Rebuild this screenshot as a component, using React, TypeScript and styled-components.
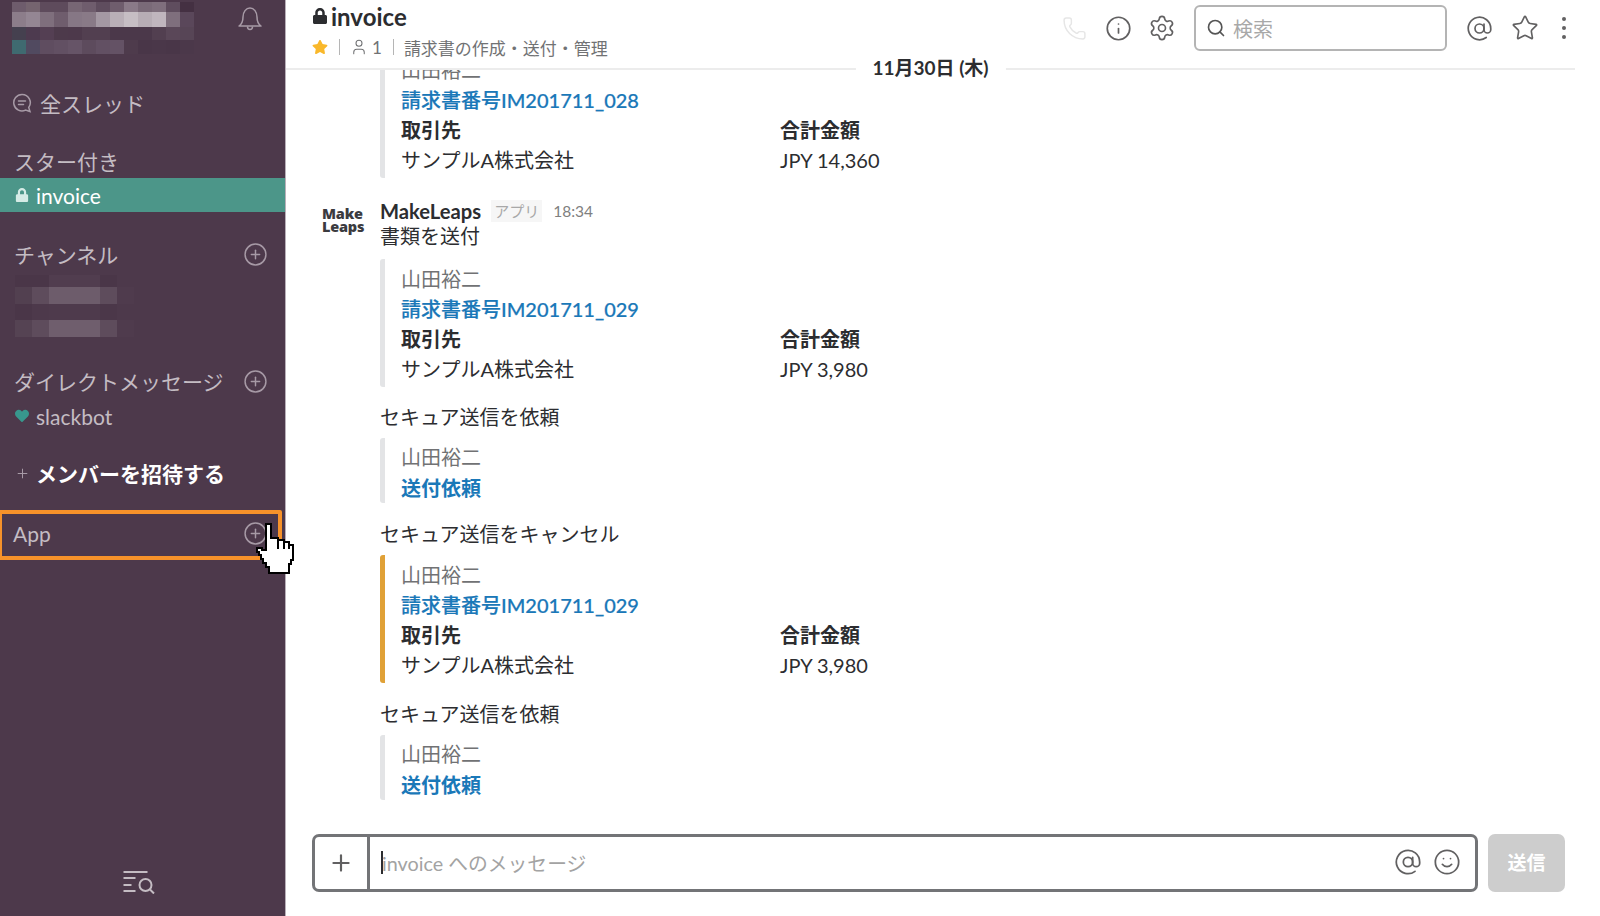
import React from 'react'
import styled, { createGlobalStyle } from 'styled-components'
import { AtSign, CirclePlus, Info, Phone, Plus, Search, Settings, Smile, Star, User } from 'lucide-react'
import { FaHeart, FaLock, FaStar } from 'react-icons/fa'

const GlobalStyle = createGlobalStyle`
  html, body {
    margin: 0;
    padding: 0;
    height: 100%;
    background: #fff;
    overflow: hidden;
    font-family: Lato, "Noto Sans CJK JP", sans-serif;
  }
  #root { height: 100%; }
`

const Page = styled.div`
  display: flex;
  width: 1600px;
  height: 916px;
  overflow: hidden;
`

const Sidebar = styled.aside`
  flex: none;
  display: flex;
  flex-direction: column;
  box-sizing: border-box;
  width: 286px;
  height: 100%;
  background: #4d394b;
  border-right: 1px solid #b9b0b9;
  color: #c4bcc3;
  font-size: 21px;
`

const TeamHeader = styled.div`
  display: flex;
  justify-content: space-between;
  height: 54px;
  padding: 2px 22px 0 12px;
`

const TeamMosaic = styled.div`
  display: grid;
  grid-template-columns: repeat(13, 14px);
  grid-template-rows: 10px 15px 13px 14px;
`

const ChannelMosaic = styled.div`
  display: grid;
  grid-template-columns: repeat(7, 17px);
  grid-template-rows: 12px 17px 16px 17px;
  margin: 7px 0 0 15px;
`

const Cell = styled.span<{ $c: string }>`
  background: ${({ $c }) => $c};
  filter: blur(0.6px);
`

const BellWrap = styled.div`
  margin-top: 3px;
  height: 26px;
  color: #a79aa6;
`

const Row = styled.div<{ $top: number }>`
  display: flex;
  align-items: center;
  justify-content: space-between;
  height: 28px;
  margin-top: ${({ $top }) => $top}px;
  padding: 0 17px 0 14px;
  white-space: nowrap;
`

const ThreadsRow = styled(Row)`
  justify-content: flex-start;
  gap: 8px;
  padding-left: 12px;
`

const ActiveChannel = styled.div`
  display: flex;
  align-items: center;
  gap: 7px;
  height: 34px;
  margin-top: 3px;
  padding-left: 15px;
  background: #4c9689;
  color: #fff;
`

const DirectRow = styled.div`
  display: flex;
  align-items: center;
  gap: 7px;
  height: 34px;
  margin-top: 4px;
  padding-left: 15px;
`

const InviteRow = styled(Row)`
  justify-content: flex-start;
  gap: 6px;
  padding-left: 15px;
  color: #fff;
  font-weight: 700;
`

const InvitePlus = styled.span`
  display: flex;
  color: #a79aa6;
`

const AppBox = styled.div`
  position: relative;
  display: flex;
  align-items: center;
  justify-content: space-between;
  box-sizing: border-box;
  width: 282px;
  height: 50px;
  margin-top: 23px;
  padding: 0 10px 4px 11px;
  border: 4px solid #f7922a;
  border-left-width: 2px;
  border-radius: 0 2px 2px 0;
`

const Cursor = styled.svg`
  position: absolute;
  left: 254px;
  top: 9px;
  shape-rendering: crispEdges;
`

const SearchFooter = styled.div`
  display: flex;
  justify-content: center;
  margin-top: auto;
  padding: 0 7px 22px 0;
`

const Main = styled.main`
  position: relative;
  flex: 1;
  display: flex;
  flex-direction: column;
  min-width: 0;
  height: 100%;
`

const Header = styled.header`
  position: relative;
  flex: none;
  z-index: 1;
  display: flex;
  justify-content: space-between;
  box-sizing: border-box;
  height: 70px;
  margin-right: 25px;
  padding: 5px 0 0 26px;
  background: #fff;
  border-bottom: 2px solid #ececec;
`

const TitleBlock = styled.div`
  display: flex;
  flex-direction: column;
`

const Title = styled.h1`
  display: flex;
  align-items: center;
  gap: 3px;
  height: 22px;
  margin: 0;
  color: #2c2d30;
  font-size: 24px;
  font-weight: 700;
`

const ChannelMeta = styled.div`
  display: flex;
  align-items: center;
  height: 24px;
  margin-top: 8px;
  color: #717274;
  font-size: 17px;
  white-space: nowrap;
`

const MetaSep = styled.span`
  width: 1px;
  height: 16px;
  margin: 0 10px 0 11px;
  background: #b5b5b5;
`

const MemberCount = styled.span`
  display: flex;
  align-items: center;
  gap: 4px;
`

const Toolbar = styled.div`
  display: flex;
  align-items: center;
  height: 46px;
`

const ToolIcon = styled.span<{ $gap: number; $faded?: boolean }>`
  display: flex;
  margin-left: ${({ $gap }) => $gap}px;
  color: ${({ $faded }) => ($faded ? '#e6e6e6' : '#616061')};
`

const SearchBox = styled.div`
  display: flex;
  align-items: center;
  gap: 7px;
  box-sizing: border-box;
  width: 253px;
  height: 46px;
  margin-left: 18px;
  padding-left: 10px;
  border: 2px solid #b4b4b4;
  border-radius: 6px;
  color: #a8a8a8;
  font-size: 20px;
`

const SearchGlass = styled.span`
  display: flex;
  color: #555;
`

const MoreDots = styled.span`
  display: flex;
  flex-direction: column;
  gap: 5px;
  margin: 0 9px 0 23px;
`

const Dot = styled.i`
  width: 4px;
  height: 4px;
  border-radius: 50%;
  background: #616061;
`

const DateDivider = styled.div`
  position: absolute;
  left: 50%;
  top: 55px;
  transform: translateX(-50%);
  padding: 0 17px;
  background: #fff;
  color: #2c2d30;
  font-size: 19px;
  font-weight: 700;
  line-height: 26px;
  white-space: nowrap;
`

const Messages = styled.section`
  flex: 1;
  display: flex;
  flex-direction: column;
  justify-content: flex-end;
  min-height: 0;
  overflow: hidden;
  padding-bottom: 34px;
  color: #2c2d30;
  font-size: 20px;
`

const MessageBody = styled.div`
  margin-left: 94px;
`

const AppMessage = styled.article`
  display: flex;
  margin-top: 20px;
`

const Avatar = styled.div`
  flex: none;
  box-sizing: border-box;
  width: 94px;
  padding: 9px 0 0 36px;
  color: #3b3b3f;
  font-family: "Open Sans", sans-serif;
  font-size: 14.500px;
  font-weight: 800;
  line-height: 13px;
  letter-spacing: -0.2px;
`

const AvatarSecond = styled.span`
  display: block;
`

const SenderLine = styled.div`
  display: flex;
  align-items: center;
  height: 25px;
`

const SenderName = styled.strong`
  font-size: 20.2px;
  font-weight: 700;
`

const AppBadge = styled.span`
  margin-left: 10px;
  padding: 0 3px;
  background: #f6f6f6;
  color: #a8a8a8;
  font-size: 15px;
  line-height: 22px;
`

const Time = styled.span`
  margin-left: 11px;
  color: #808080;
  font-size: 15.500px;
`

const MessageText = styled.div<{ $top?: number }>`
  margin-top: ${({ $top }) => $top ?? 16}px;
  line-height: 30px;
`

const SentText = styled.div`
  line-height: 26px;
`

const Attachment = styled.div<{ $warn?: boolean; $gap?: number }>`
  margin-top: ${({ $gap }) => $gap ?? 6}px;
  padding: 5px 0 3px 16px;
  border-left: 5px solid ${({ $warn }) => ($warn ? '#e0a137' : '#e3e4e6')};
  border-radius: 3px;
  line-height: 30px;
`

const ShortAttachment = styled(Attachment)`
  padding: 4px 0 0 16px;
  line-height: 30.500px;
`

const Author = styled.div`
  color: #717274;
`

const FileLink = styled.div`
  color: #1a78b8;
  font-weight: 500;
  -webkit-text-stroke: 0.2px #1a78b8;
`

const ActionLink = styled.div`
  color: #1a78b8;
  font-weight: 700;
`

const Fields = styled.div`
  display: grid;
  grid-template-columns: 379px 1fr;
`

const FieldLabel = styled.div`
  font-weight: 700;
`

const Composer = styled.div`
  flex: none;
  display: flex;
  gap: 10px;
  height: 82px;
  padding-left: 26px;
`

const InputShell = styled.div`
  display: flex;
  box-sizing: border-box;
  width: 1166px;
  height: 58px;
  border: 3px solid #737477;
  border-radius: 7px;
`

const AttachButton = styled.div`
  flex: none;
  display: flex;
  align-items: center;
  justify-content: center;
  width: 52px;
  border-right: 3px solid #737477;
  color: #616061;
`

const InputArea = styled.div`
  flex: 1;
  display: flex;
  align-items: center;
  padding: 0 0 2px 11px;
  color: #a3a3a3;
  font-size: 19.800px;
`

const Caret = styled.span`
  width: 2px;
  height: 23px;
  margin-right: -1px;
  background: #2c2d30;
`

const InputIcons = styled.div`
  display: flex;
  gap: 11px;
  margin-left: auto;
  padding-right: 14px;
  color: #616061;
`

const SendButton = styled.button`
  width: 77px;
  height: 58px;
  padding: 0 0 4px;
  border: 0;
  border-radius: 7px;
  background: #cdcdcd;
  color: #fff;
  font: 700 19px Lato, "Noto Sans CJK JP", sans-serif;
`

const teamRows = [
  ['#6e5c6c', '#75646f', '#5e4b5c', '#5e4b5c', '#776674', '#6f5d6d', '#5f4d5e', '#6f5d6d', '#8a7a88', '#7a6a78', '#7f6f7d', '#5f4d5e', '#443042'],
  ['#8c7d8a', '#948693', '#7f6f7d', '#6f5d6d', '#867785', '#897a87', '#a498a3', '#b9afb7', '#c6bec4', '#b7adb5', '#c0b6be', '#7f6f7d', '#5a475a'],
  ['#45404f', '#4d3a4f', '#543f53', '#4d3a4b', '#4d394b', '#523f50', '#523f50', '#4b384a', '#4b384a', '#4b384a', '#523f50', '#5a4758', '#574556'],
  ['#3f6a70', '#514a60', '#5f4d60', '#625063', '#665467', '#5d4b5d', '#625063', '#645265', '#4e3b4c', '#493648', '#4a3749', '#493648', '#4b384a'],
]

const channelRows = [
  ['#4a3648', '#4a3648', '#513d4f', '#513d4f', '#513d4f', '#4a3648', '#4d394b'],
  ['#524050', '#5e4c5c', '#6d5c6b', '#6d5c6b', '#6d5c6b', '#5e4c5c', '#4f3b4d'],
  ['#4a3648', '#4d394b', '#4e3a4c', '#4e3a4c', '#4e3a4c', '#4b3749', '#4d394b'],
  ['#554353', '#5e4c5c', '#6f5e6d', '#6f5e6d', '#6f5e6d', '#5e4c5c', '#4f3b4d'],
]

const Mosaic = ({ rows }: { rows: string[][] }) => (
  <>
    {rows.flat().map((c, i) => (
      <Cell key={i} $c={c} />
    ))}
  </>
)

const BellIcon = () => (
  <svg width="26" height="26" viewBox="0 0 26 26" fill="none" stroke="currentColor" strokeWidth="1.5" strokeLinejoin="round">
    <path d="M2 21c3-2 4-4 4-9 0-5 3-9 7-9s7 4 7 9c0 5 1 7 4 9z" />
    <path d="M10.5 21.5c0 2 1 3 2.500 3s2.500-1 2.500-3" />
  </svg>
)

const ThreadsIcon = () => (
  <svg width="20" height="20" viewBox="0 0 20 20" fill="none" stroke="#a79aa6" strokeWidth="1.5" strokeLinecap="round">
    <path d="M10 1.500a8.200 8.200 0 1 0 3.500 15.600l4.500 1.400-1.300-4a8.200 8.200 0 0 0-6.700-13z" />
    <path d="M6.500 8h7M6.500 11.500h5" />
  </svg>
)

const HandCursor = () => (
  <Cursor width="40" height="52" viewBox="0 0 40 52">
    <path
      d="M10 1h5v14h7v2h6v2h5v3h4v15h-2v4h-2v9H13v-6h-3v-4H7v-4H5v-4H3v-3H1v-4h5v2h4z"
      fill="#fff"
      stroke="#000"
      strokeWidth="2"
    />
    <path d="M22 17v9M28 19v7M33 22v4" stroke="#000" strokeWidth="1.5" fill="none" />
  </Cursor>
)

const MessageSearchIcon = () => (
  <svg width="34" height="24" viewBox="0 0 33 24" fill="none" stroke="#c4bcc3" strokeWidth="2">
    <path d="M1 2h24M1 8h12M1 15h8M1 21h12" />
    <circle cx="23" cy="15" r="6" />
    <path d="M27.500 19.500l4 4" />
  </svg>
)

const plus = <CirclePlus size={25} strokeWidth={1.4} color="#a79aa6" />

interface InvoiceProps {
  number: string
  amount: string
  warn?: boolean
  gap?: number
}

const InvoiceAttachment = ({ number, amount, warn, gap }: InvoiceProps) => (
  <Attachment $warn={warn} $gap={gap}>
    <Author>山田裕二</Author>
    <FileLink>請求書番号{number}</FileLink>
    <Fields>
      <FieldLabel>取引先</FieldLabel>
      <FieldLabel>合計金額</FieldLabel>
      <div>サンプルA株式会社</div>
      <div>{amount}</div>
    </Fields>
  </Attachment>
)

const SecureAttachment = () => (
  <ShortAttachment>
    <Author>山田裕二</Author>
    <ActionLink>送付依頼</ActionLink>
  </ShortAttachment>
)

export default function App() {
  return (
    <Page>
      <GlobalStyle />
      <Sidebar>
        <TeamHeader>
          <TeamMosaic>
            <Mosaic rows={teamRows} />
          </TeamMosaic>
          <BellWrap>
            <BellIcon />
          </BellWrap>
        </TeamHeader>
        <ThreadsRow $top={33}>
          <ThreadsIcon />
          全スレッド
        </ThreadsRow>
        <Row $top={30}>スター付き</Row>
        <ActiveChannel>
          <FaLock size={14} color="#d5ebe6" />
          invoice
        </ActiveChannel>
        <Row $top={28}>チャンネル{plus}</Row>
        <ChannelMosaic>
          <Mosaic rows={channelRows} />
        </ChannelMosaic>
        <Row $top={30}>ダイレクトメッセージ{plus}</Row>
        <DirectRow>
          <FaHeart size={14} color="#38978d" />
          slackbot
        </DirectRow>
        <InviteRow $top={26}>
          <InvitePlus>
            <Plus size={15} strokeWidth={1.6} />
          </InvitePlus>
          メンバーを招待する
        </InviteRow>
        <AppBox>
          App
          {plus}
          <HandCursor />
        </AppBox>
        <SearchFooter>
          <MessageSearchIcon />
        </SearchFooter>
      </Sidebar>

      <Main>
        <Header>
          <TitleBlock>
            <Title>
              <FaLock size={16} />
              invoice
            </Title>
            <ChannelMeta>
              <FaStar size={16} color="#f9b82b" />
              <MetaSep />
              <MemberCount>
                <User size={18} strokeWidth={1.4} />1
              </MemberCount>
              <MetaSep />
              請求書の作成・送付・管理
            </ChannelMeta>
          </TitleBlock>
          <Toolbar>
            <ToolIcon $gap={0} $faded>
              <Phone size={25} strokeWidth={1.4} />
            </ToolIcon>
            <ToolIcon $gap={18}>
              <Info size={27} strokeWidth={1.5} />
            </ToolIcon>
            <ToolIcon $gap={16}>
              <Settings size={28} strokeWidth={1.4} />
            </ToolIcon>
            <SearchBox>
              <SearchGlass>
                <Search size={20} strokeWidth={2} />
              </SearchGlass>
              検索
            </SearchBox>
            <ToolIcon $gap={19}>
              <AtSign size={27} strokeWidth={1.5} />
            </ToolIcon>
            <ToolIcon $gap={18}>
              <Star size={28} strokeWidth={1.4} />
            </ToolIcon>
            <MoreDots>
              <Dot />
              <Dot />
              <Dot />
            </MoreDots>
          </Toolbar>
          <DateDivider>11月30日 (木)</DateDivider>
        </Header>

        <Messages>
          <MessageBody>
            <InvoiceAttachment number="IM201711_028" amount="JPY 14,360" />
          </MessageBody>
          <AppMessage>
            <Avatar>
              Make
              <AvatarSecond>Leaps</AvatarSecond>
            </Avatar>
            <div>
              <SenderLine>
                <SenderName>MakeLeaps</SenderName>
                <AppBadge>アプリ</AppBadge>
                <Time>18:34</Time>
              </SenderLine>
              <SentText>書類を送付</SentText>
              <InvoiceAttachment number="IM201711_029" amount="JPY 3,980" gap={10} />
            </div>
          </AppMessage>
          <MessageBody>
            <MessageText $top={15}>セキュア送信を依頼</MessageText>
            <SecureAttachment />
            <MessageText>セキュア送信をキャンセル</MessageText>
            <InvoiceAttachment number="IM201711_029" amount="JPY 3,980" warn />
            <MessageText>セキュア送信を依頼</MessageText>
            <SecureAttachment />
          </MessageBody>
        </Messages>

        <Composer>
          <InputShell>
            <AttachButton>
              <Plus size={26} strokeWidth={2} />
            </AttachButton>
            <InputArea>
              <Caret />
              invoice へのメッセージ
              <InputIcons>
                <AtSign size={28} strokeWidth={1.5} />
                <Smile size={28} strokeWidth={1.5} />
              </InputIcons>
            </InputArea>
          </InputShell>
          <SendButton>送信</SendButton>
        </Composer>
      </Main>
    </Page>
  )
}
